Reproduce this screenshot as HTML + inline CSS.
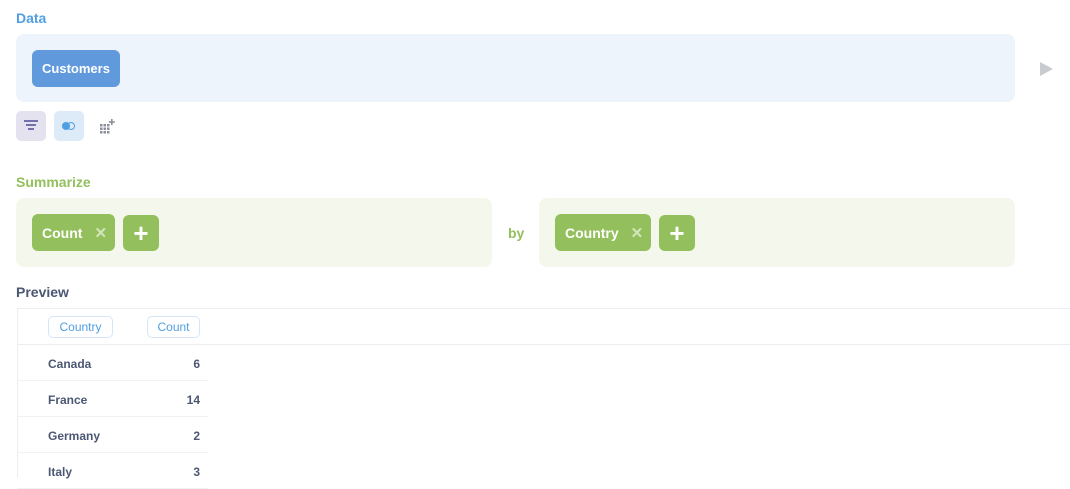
<!DOCTYPE html>
<html><head><style>
*{box-sizing:border-box;margin:0;padding:0}
body{width:1070px;height:476px;overflow:hidden;background:#fff;font-family:"Liberation Sans",sans-serif;position:relative;font-weight:bold}
.a{position:absolute}
.lbl{font-size:14px}
.pill{position:absolute;border-radius:6px;color:#fff;font-size:14px;display:flex;align-items:center;justify-content:center}
.g{background:#93bf5c}
.hdr{position:absolute;top:316px;height:22px;border:1px solid #d6e6f8;border-radius:5px;color:#509ee3;font-size:12px;font-weight:normal;display:flex;align-items:center;justify-content:center}
.row{position:absolute;left:17px;width:191px;height:36px;border-bottom:1px solid #f2f2f4;font-size:12px;color:#4c5773}
.row span{position:absolute;top:12px}
</style></head><body>
<div class="a lbl" style="left:16px;top:10px;color:#509ee3">Data</div>
<div class="a" style="left:16px;top:34px;width:999px;height:68px;background:#edf4fc;border-radius:8px"></div>
<div class="pill" style="left:32px;top:50px;width:88px;height:37px;background:#6199dd;font-size:13px">Customers</div>
<div class="a" style="left:1040px;top:62px;width:0;height:0;border-left:13px solid #c8cbd0;border-top:7px solid transparent;border-bottom:7px solid transparent"></div>
<div class="a" style="left:16px;top:111px;width:30px;height:30px;background:#e3e2ee;border-radius:5px"></div>
<div class="a" style="left:24px;top:120px;width:14px;height:2px;background:#7172ad"></div>
<div class="a" style="left:26px;top:124px;width:10px;height:2px;background:#7172ad"></div>
<div class="a" style="left:28px;top:128px;width:6px;height:2px;background:#7172ad"></div>
<div class="a" style="left:54px;top:111px;width:30px;height:30px;background:#ddeaf8;border-radius:5px"></div>
<div class="a" style="left:62px;top:122px;width:8px;height:8px;border-radius:50%;background:#509ee3"></div>
<div class="a" style="left:67px;top:122px;width:8px;height:8px;border-radius:50%;border:1.5px solid #509ee3"></div>
<svg class="a" style="left:99px;top:118px" width="16" height="16" viewBox="0 0 16 16" fill="#8a8f99">
<rect x="1" y="6" width="2.5" height="2.5"/><rect x="4.5" y="6" width="2.5" height="2.5"/><rect x="8" y="6" width="2.5" height="2.5"/>
<rect x="1" y="9.5" width="2.5" height="2.5"/><rect x="4.5" y="9.5" width="2.5" height="2.5"/><rect x="8" y="9.5" width="2.5" height="2.5"/>
<rect x="1" y="13" width="2.5" height="2.5"/><rect x="4.5" y="13" width="2.5" height="2.5"/><rect x="8" y="13" width="2.5" height="2.5"/>
<rect x="12" y="1" width="1.6" height="6"/><rect x="9.8" y="3.2" width="6" height="1.6"/></svg>
<div class="a lbl" style="left:16px;top:174px;color:#93bf5c">Summarize</div>
<div class="a" style="left:16px;top:198px;width:476px;height:69px;background:#f3f7ec;border-radius:8px"></div>
<div class="a" style="left:539px;top:198px;width:476px;height:69px;background:#f3f7ec;border-radius:8px"></div>
<div class="pill g" style="left:32px;top:214px;width:83px;height:37px;justify-content:flex-start;padding-left:10px">Count<span style="margin-left:12px;color:#d3e5bd;font-size:15px">✕</span></div>
<div class="pill g" style="left:123px;top:215px;width:36px;height:36px;font-size:26px">+</div>
<div class="a" style="left:508px;top:225px;font-size:14px;color:#93bf5c">by</div>
<div class="pill g" style="left:555px;top:214px;width:96px;height:37px;justify-content:flex-start;padding-left:10px">Country<span style="margin-left:12px;color:#d3e5bd;font-size:15px">✕</span></div>
<div class="pill g" style="left:659px;top:215px;width:36px;height:36px;font-size:26px">+</div>
<div class="a lbl" style="left:16px;top:284px;color:#4c5773">Preview</div>
<div class="a" style="left:17px;top:308px;width:1053px;height:170px;border-left:1px solid #eceef1;border-top:1px solid #eceef1"></div>
<div class="a" style="left:17px;top:344px;width:1053px;height:1px;background:#eceef1"></div>
<div class="hdr" style="left:48px;width:65px">Country</div>
<div class="hdr" style="left:147px;width:53px">Count</div>
<div class="row" style="top:345px"><span style="left:31px">Canada</span><span style="right:8px">6</span></div>
<div class="row" style="top:381px"><span style="left:31px">France</span><span style="right:8px">14</span></div>
<div class="row" style="top:417px"><span style="left:31px">Germany</span><span style="right:8px">2</span></div>
<div class="row" style="top:453px"><span style="left:31px">Italy</span><span style="right:8px">3</span></div>
</body></html>
